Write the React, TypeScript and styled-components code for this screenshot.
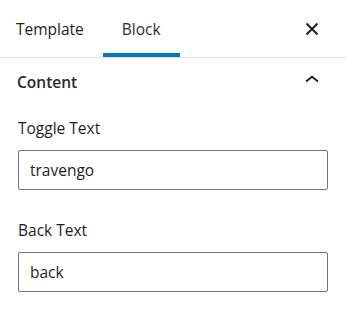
import React from "react";
import styled, { createGlobalStyle } from "styled-components";

const GlobalStyle = createGlobalStyle`
  body {
    margin: 0;
    background: #ffffff;
    font-family: "Open Sans", "Noto Sans", sans-serif;
    color: #1e1e1e;
  }
`;

const Panel = styled.div`
  width: 346px;
  background: #ffffff;
`;

const TabBar = styled.div`
  display: flex;
  align-items: stretch;
  height: 57px;
  border-bottom: 1px solid #e0e0e0;
`;

interface TabProps {
  $active?: boolean;
}
const Tab = styled.button<TabProps>`
  border: none;
  background: transparent;
  padding: 0 19px;
  font-family: inherit;
  font-size: 15.5px;
  font-weight: 500;
  color: ${({ $active }: TabProps) => ($active ? "#2f2f2f" : "#1e1e1e")};
  box-shadow: ${({ $active }: TabProps) =>
    $active ? "inset 0 -4px 0 #007cba" : "none"};
  cursor: pointer;
  &:first-child {
    padding-left: 16px;
  }
`;

const IconButton = styled.button`
  display: flex;
  align-items: center;
  justify-content: center;
  width: 40px;
  height: 40px;
  margin-left: auto;
  margin-right: 14px;
  align-self: center;
  border: none;
  background: transparent;
  padding: 0;
  color: #1e1e1e;
`;

const SectionHeader = styled.div`
  display: flex;
  align-items: center;
  height: 47px;
  padding-left: 17px;
  font-size: 15.5px;
  font-weight: 600;
  line-height: 22px;
  color: #2a2a2a;
`;

const SectionBody = styled.div`
  display: flex;
  flex-direction: column;
  gap: 29px;
  padding: 12px 18px 0;
`;

const Field = styled.div`
  display: flex;
  flex-direction: column;
  gap: 11px;
`;

const Label = styled.label`
  font-size: 15.5px;
  line-height: 22px;
  color: #1e1e1e;
`;

const TextInput = styled.input`
  box-sizing: border-box;
  width: 100%;
  height: 40px;
  padding: 0 11px;
  border: 1px solid #757575;
  border-radius: 2px;
  font-family: inherit;
  font-size: 15.5px;
  color: #1e1e1e;
  background: #ffffff;
  outline: none;
`;

function CloseIcon() {
  return (
    <svg width="24" height="24" viewBox="0 0 24 24" fill="none">
      <path
        d="M6.5 6.5L17.5 17.5M17.5 6.5L6.5 17.5"
        stroke="currentColor"
        strokeWidth="2"
      />
    </svg>
  );
}

function ChevronUpIcon() {
  return (
    <svg width="24" height="24" viewBox="0 0 24 24" fill="none">
      <path
        d="M6 11.5L12 6.8L18 11.5"
        stroke="currentColor"
        strokeWidth="1.9"
      />
    </svg>
  );
}

export default function App() {
  return (
    <Panel>
      <GlobalStyle />
      <TabBar>
        <Tab>Template</Tab>
        <Tab $active>Block</Tab>
        <IconButton aria-label="Close">
          <CloseIcon />
        </IconButton>
      </TabBar>
      <SectionHeader>
        Content
        <IconButton aria-label="Collapse">
          <ChevronUpIcon />
        </IconButton>
      </SectionHeader>
      <SectionBody>
        <Field>
          <Label>Toggle Text</Label>
          <TextInput defaultValue="travengo" />
        </Field>
        <Field>
          <Label>Back Text</Label>
          <TextInput defaultValue="back" />
        </Field>
      </SectionBody>
    </Panel>
  );
}
